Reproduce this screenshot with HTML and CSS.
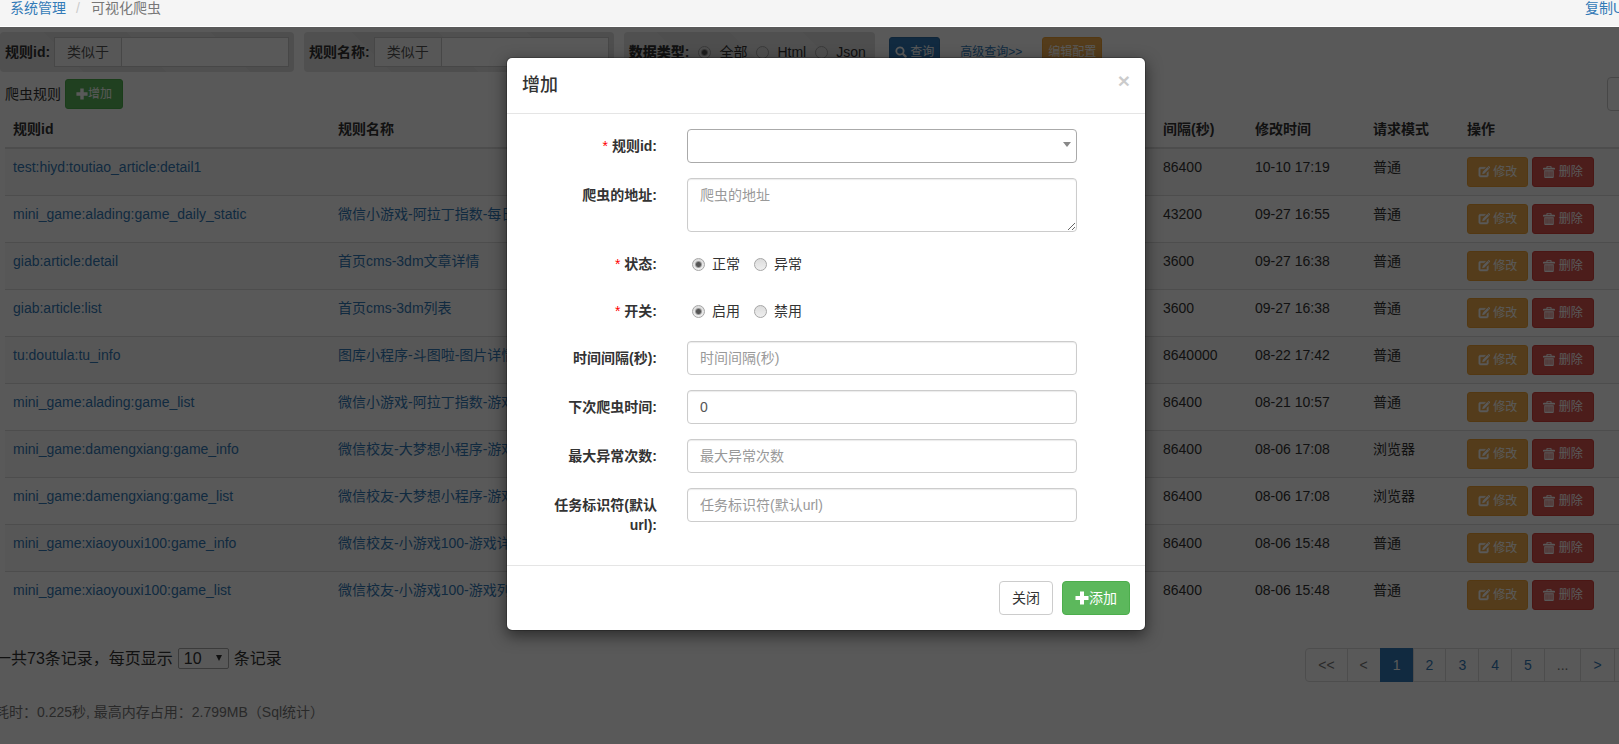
FILE: index.html
```html
<!DOCTYPE html>
<html lang="zh-CN">
<head>
<meta charset="utf-8">
<title>可视化爬虫</title>
<link rel="stylesheet" href="styles.css">
</head>
<body>
<svg class="sprite" aria-hidden="true">
  <symbol id="i-plus" viewBox="0 0 14 14"><path d="M5 .5h4V5h4.500v4H9v4.500H5V9H.5V5H5z"/></symbol>
  <symbol id="i-search" viewBox="0 0 14 14"><path fill-rule="evenodd" d="M5.800.6a5.200 5.200 0 1 0 2.700 9.600l3 3.200a1.100 1.100 0 0 0 1.600 0l.3-.3a1.100 1.100 0 0 0 0-1.600L10.300 8.500A5.200 5.200 0 0 0 5.800.6zm0 2a3.200 3.200 0 1 1 0 6.400 3.200 3.200 0 0 1 0-6.400z"/></symbol>
  <symbol id="i-edit" viewBox="0 0 14 14"><path stroke="currentColor" stroke-width=".5" d="M2.600 1.500h6.200L7.200 3.200H3.400c-.5 0-.8.3-.8.8v6.400c0 .5.3.8.8.8h6.200c.5 0 .8-.3.8-.8V8.200l1.700-1.700v4.400c0 1.200-.8 2-2 2H2.900c-1.200 0-2-.8-2-2V3.500c0-1.200.7-2 1.700-2z"/><path d="M11 1.300l2 2-5.400 5.400-2.700.8.700-2.800zM11.500.8l.6-.5c.3-.3.6-.3.9 0l1 1c.3.3.3.6 0 .9l-.5.6z"/></symbol>
  <symbol id="i-trash" viewBox="0 0 14 14"><path fill-rule="evenodd" d="M5 0h4c.6 0 1 .4 1 1v1h3c.5 0 1 .4 1 1v1H0V3c0-.6.500-1 1-1h3V1c0-.6.400-1 1-1zm.2 1v1h3.600V1zM1.500 5h11v8c0 .6-.4 1-1 1h-9c-.6 0-1-.4-1-1zM3 6v6.500h1V6zm2.300 0v6.500h1V6zm2.400 0v6.500h1V6zM10 6v6.500h1V6z"/></symbol>
</svg>

<div class="page">
  <nav class="crumbs">
    <a href="#">系统管理</a><span class="crumb-sep">/</span><span class="crumb-now">可视化爬虫</span>
    <a class="crumb-copy" href="#">复制URL</a>
  </nav>

  <main class="workspace">
    <form class="filters">
      <div class="filter">
        <label for="f-id">规则id:</label>
        <div class="group"><span class="addon">类似于</span><input id="f-id" type="text"></div>
      </div>
      <div class="filter">
        <label for="f-name">规则名称:</label>
        <div class="group"><span class="addon">类似于</span><input id="f-name" type="text"></div>
      </div>
      <div class="filter filter-type">
        <b>数据类型:</b>
        <label class="choice"><input type="radio" name="type" checked>全部</label>
        <label class="choice"><input type="radio" name="type">Html</label>
        <label class="choice"><input type="radio" name="type">Json</label>
      </div>
      <div class="filter-actions">
        <button type="button" class="btn sm tight primary"><svg><use href="#i-search"/></svg> 查询</button>
        <a href="#">高级查询&gt;&gt;</a>
        <button type="button" class="btn sm tight warning">编辑配置</button>
      </div>
    </form>

    <div class="toolbar">
      <span>爬虫规则</span>
      <button type="button" class="btn sm success"><svg><use href="#i-plus"/></svg>增加</button>
      <button type="button" class="btn plain export" aria-label="导出"><svg><use href="#i-edit"/></svg></button>
    </div>

    <table class="rules">
      <colgroup><col class="c-id"><col><col class="c-gap"><col class="c-time"><col class="c-mode"><col class="c-ops"></colgroup>
      <thead><tr><th>规则id</th><th>规则名称</th><th>间隔(秒)</th><th>修改时间</th><th>请求模式</th><th>操作</th></tr></thead>
      <tbody>
        <tr><td><a href="#">test:hiyd:toutiao_article:detail1</a></td><td></td><td>86400</td><td>10-10 17:19</td><td>普通</td><td><div class="ops"><button type="button" class="btn sm warning"><svg><use href="#i-edit"/></svg> 修改</button><button type="button" class="btn sm danger"><svg><use href="#i-trash"/></svg> 删除</button></div></td></tr>
        <tr><td><a href="#">mini_game:alading:game_daily_static</a></td><td><a href="#">微信小游戏-阿拉丁指数-每日</a></td><td>43200</td><td>09-27 16:55</td><td>普通</td><td><div class="ops"><button type="button" class="btn sm warning"><svg><use href="#i-edit"/></svg> 修改</button><button type="button" class="btn sm danger"><svg><use href="#i-trash"/></svg> 删除</button></div></td></tr>
        <tr><td><a href="#">giab:article:detail</a></td><td><a href="#">首页cms-3dm文章详情</a></td><td>3600</td><td>09-27 16:38</td><td>普通</td><td><div class="ops"><button type="button" class="btn sm warning"><svg><use href="#i-edit"/></svg> 修改</button><button type="button" class="btn sm danger"><svg><use href="#i-trash"/></svg> 删除</button></div></td></tr>
        <tr><td><a href="#">giab:article:list</a></td><td><a href="#">首页cms-3dm列表</a></td><td>3600</td><td>09-27 16:38</td><td>普通</td><td><div class="ops"><button type="button" class="btn sm warning"><svg><use href="#i-edit"/></svg> 修改</button><button type="button" class="btn sm danger"><svg><use href="#i-trash"/></svg> 删除</button></div></td></tr>
        <tr><td><a href="#">tu:doutula:tu_info</a></td><td><a href="#">图库小程序-斗图啦-图片详情</a></td><td>8640000</td><td>08-22 17:42</td><td>普通</td><td><div class="ops"><button type="button" class="btn sm warning"><svg><use href="#i-edit"/></svg> 修改</button><button type="button" class="btn sm danger"><svg><use href="#i-trash"/></svg> 删除</button></div></td></tr>
        <tr><td><a href="#">mini_game:alading:game_list</a></td><td><a href="#">微信小游戏-阿拉丁指数-游戏</a></td><td>86400</td><td>08-21 10:57</td><td>普通</td><td><div class="ops"><button type="button" class="btn sm warning"><svg><use href="#i-edit"/></svg> 修改</button><button type="button" class="btn sm danger"><svg><use href="#i-trash"/></svg> 删除</button></div></td></tr>
        <tr><td><a href="#">mini_game:damengxiang:game_info</a></td><td><a href="#">微信校友-大梦想小程序-游戏</a></td><td>86400</td><td>08-06 17:08</td><td>浏览器</td><td><div class="ops"><button type="button" class="btn sm warning"><svg><use href="#i-edit"/></svg> 修改</button><button type="button" class="btn sm danger"><svg><use href="#i-trash"/></svg> 删除</button></div></td></tr>
        <tr><td><a href="#">mini_game:damengxiang:game_list</a></td><td><a href="#">微信校友-大梦想小程序-游戏</a></td><td>86400</td><td>08-06 17:08</td><td>浏览器</td><td><div class="ops"><button type="button" class="btn sm warning"><svg><use href="#i-edit"/></svg> 修改</button><button type="button" class="btn sm danger"><svg><use href="#i-trash"/></svg> 删除</button></div></td></tr>
        <tr><td><a href="#">mini_game:xiaoyouxi100:game_info</a></td><td><a href="#">微信校友-小游戏100-游戏详情</a></td><td>86400</td><td>08-06 15:48</td><td>普通</td><td><div class="ops"><button type="button" class="btn sm warning"><svg><use href="#i-edit"/></svg> 修改</button><button type="button" class="btn sm danger"><svg><use href="#i-trash"/></svg> 删除</button></div></td></tr>
        <tr><td><a href="#">mini_game:xiaoyouxi100:game_list</a></td><td><a href="#">微信校友-小游戏100-游戏列表</a></td><td>86400</td><td>08-06 15:48</td><td>普通</td><td><div class="ops"><button type="button" class="btn sm warning"><svg><use href="#i-edit"/></svg> 修改</button><button type="button" class="btn sm danger"><svg><use href="#i-trash"/></svg> 删除</button></div></td></tr>
      </tbody>
    </table>

    <div class="paging">
      <label class="per-page">一共73条记录，每页显示
        <span class="size-box"><select><option>10</option></select></span>
        条记录</label>
      <ul class="pages">
        <li><span>&lt;&lt;</span></li><li><span>&lt;</span></li><li><a class="on" href="#">1</a></li><li><a href="#">2</a></li><li><a href="#">3</a></li><li><a href="#">4</a></li><li><a href="#">5</a></li><li><span>...</span></li><li><a href="#">&gt;</a></li><li><a href="#">&gt;&gt;</a></li>
      </ul>
    </div>
    <p class="stats">耗时：0.225秒, 最高内存占用：2.799MB（Sql统计）</p>

    <div class="backdrop">
      <form class="modal" role="dialog" aria-labelledby="modal-title">
        <header class="modal-head">
          <h4 id="modal-title">增加</h4>
          <button type="button" class="close" aria-label="关闭窗口">×</button>
        </header>
        <div class="modal-body">
          <div class="field"><label for="m-id"><i>*</i> 规则id:</label><div class="pick"><select id="m-id" class="control"><option></option></select></div></div>
          <div class="field"><label for="m-url">爬虫的地址:</label><textarea id="m-url" class="control" rows="2" placeholder="爬虫的地址"></textarea></div>
          <div class="field"><span class="label"><i>*</i> 状态:</span><div class="choices"><label class="choice"><input type="radio" name="state" checked>正常</label><label class="choice"><input type="radio" name="state">异常</label></div></div>
          <div class="field"><span class="label"><i>*</i> 开关:</span><div class="choices"><label class="choice"><input type="radio" name="switch" checked>启用</label><label class="choice"><input type="radio" name="switch">禁用</label></div></div>
          <div class="field"><label for="m-gap">时间间隔(秒):</label><input id="m-gap" class="control" type="text" placeholder="时间间隔(秒)"></div>
          <div class="field"><label for="m-next">下次爬虫时间:</label><input id="m-next" class="control" type="text" value="0"></div>
          <div class="field"><label for="m-max">最大异常次数:</label><input id="m-max" class="control" type="text" placeholder="最大异常次数"></div>
          <div class="field"><label for="m-task">任务标识符(默认url):</label><input id="m-task" class="control" type="text" placeholder="任务标识符(默认url)"></div>
        </div>
        <footer class="modal-foot">
          <button type="button" class="btn plain">关闭</button>
          <button type="button" class="btn success"><svg><use href="#i-plus"/></svg>添加</button>
        </footer>
      </form>
    </div>
  </main>
</div>
</body>
</html>
```
FILE: styles.css
```css
* { box-sizing: border-box; }

html, body { margin: 0; }

body {
  overflow: hidden;
  font: 14px/20px "Liberation Sans", "Noto Sans CJK SC", sans-serif;
  color: #333;
  background: #fff;
}

input, select, textarea, button { font: inherit; color: inherit; margin: 0; }
a { color: #337ab7; text-decoration: none; }
.sprite { display: none; }

/* The content is wider than the window and runs past its right edge. */
.page {
  width: calc(100% + 33px);
  min-height: 100vh;
  display: flex;
  flex-direction: column;
}

.crumbs {
  display: flex;
  padding: 0 11px 10px 10px;
  margin-bottom: 1px;
  line-height: 16px;
  background: #f5f5f5;
}
.crumb-sep { padding: 0 11px 0 10px; color: #ccc; }
.crumb-now { color: #777; }
.crumb-copy { margin-left: auto; }

.workspace { position: relative; flex: 1; padding: 5px 5px 0 0; }

/* Filters */
.filters { display: flex; gap: 10px; }
.filter {
  display: flex;
  align-items: center;
  gap: 4px;
  height: 40px;
  padding: 0 5px;
  border-radius: 4px;
  font-weight: bold;
  background: #e0e0e0 linear-gradient(45deg, rgba(255,255,255,.15) 25%, transparent 25%, transparent 50%, rgba(255,255,255,.15) 50%, rgba(255,255,255,.15) 75%, transparent 75%);
}
.group { display: flex; height: 30px; font-weight: normal; }
.addon {
  padding: 4px 12px;
  border: 1px solid #ccc;
  border-right: 0;
  background: #f9f9f9;
  color: #555;
}
.group input { width: 168px; border: 1px solid #ccc; background: #fff; }
.filter-type { gap: 0; padding-right: 9px; }
.filter-type .choice { margin-left: 9px; gap: 8px; }
.filter-actions { display: flex; align-items: center; gap: 20px; margin-left: 4px; font-size: 12px; }

.choice { display: inline-flex; align-items: center; gap: 7px; font-weight: normal; }
.choice input {
  appearance: none;
  width: 13px;
  height: 13px;
  border: 1px solid #a6a6a6;
  border-radius: 50%;
  background: linear-gradient(#dcdcdc, #efefef);
}
.choice input:checked {
  background: radial-gradient(circle, #555 0 2px, transparent 4px), linear-gradient(#dcdcdc, #efefef);
}

/* Buttons */
.btn {
  height: 34px;
  padding: 0 12px;
  border: 1px solid;
  border-radius: 4px;
  color: #fff;
  white-space: pre;
}
.btn svg { width: 14px; height: 14px; fill: currentColor; vertical-align: -2px; }
.btn.sm { height: 30px; padding: 0 10px; border-radius: 3px; font-size: 12px; }
.btn.sm svg { width: 12px; height: 12px; }
.btn.tight { padding: 0 5px; }
.primary { background: #337ab7; border-color: #2e6da4; }
.success { background: #5cb85c; border-color: #4cae4c; }
.warning { background: #f0ad4e; border-color: #eea236; }
.danger { background: #d9534f; border-color: #d43f3a; }
.plain { background: #fff; border-color: #ccc; color: #333; }

.toolbar { display: flex; align-items: center; gap: 4px; height: 34px; margin: 5px 0 0 5px; }
.export { margin-left: auto; color: #5a9b2f; }

/* Table */
.rules { width: calc(100% - 5px); margin-left: 5px; border-spacing: 0; table-layout: fixed; }
.c-id { width: 325px; }
.c-gap { width: 92px; }
.c-time { width: 118px; }
.c-mode { width: 94px; }
.c-ops { width: 188px; }
.rules th, .rules td { padding: 8px; text-align: left; vertical-align: top; }
.rules th { border-bottom: 1px solid #ddd; }
.rules td { border-top: 1px solid #ddd; }
.rules tbody tr:nth-child(odd) { background: #f9f9f9; }
.ops { display: flex; gap: 4px; }

/* Paging */
.paging { display: flex; justify-content: space-between; margin: 30px -9px 0 -5px; }
.per-page { display: flex; gap: 5px; height: 21px; font-size: 16px; line-height: 21px; }
.size-box { position: relative; display: flex; }
.size-box select {
  appearance: none;
  width: 51px;
  padding: 0 5px;
  border: 1px solid #a9a9a9;
  border-radius: 2px;
  background: #fff;
  line-height: 19px;
}
.size-box::after {
  content: "";
  position: absolute;
  right: 7px;
  top: 7px;
  border: 3px solid transparent;
  border-top: 6px solid #333;
  border-bottom: 0;
}
.pages { display: flex; margin: 0; padding: 0; list-style: none; }
.pages a, .pages span { display: block; padding: 6px 12px; margin-left: -1px; border: 1px solid #ddd; background: #fff; }
.pages span { color: #777; }
.pages li:first-child span { border-radius: 4px 0 0 4px; }
.pages .on { background: #337ab7; border-color: #337ab7; color: #fff; }
.stats { margin: 20px 0 0 -5px; color: #777; }

/* Dialog */
.backdrop { position: absolute; inset: 0; padding-top: 30px; background: rgba(0,0,0,.65); }
.modal {
  width: 640px;
  margin: 0 auto;
  border: 1px solid rgba(0,0,0,.2);
  border-radius: 6px;
  background: #fff;
  background-clip: padding-box;
  box-shadow: 0 5px 15px rgba(0,0,0,.5);
}
.modal-head {
  display: flex;
  justify-content: space-between;
  align-items: flex-start;
  padding: 15px;
  border-bottom: 1px solid #e5e5e5;
}
.modal-head h4 { margin: 0; font-size: 18px; line-height: 25px; font-weight: 500; }
.close { padding: 0; border: 0; background: none; font-size: 21px; line-height: 16px; font-weight: bold; color: #000; opacity: .2; }
.modal-body { padding: 15px 68px 15px 30px; }
.field { display: grid; grid-template-columns: 120px 1fr; gap: 30px; margin-bottom: 15px; }
.field > label, .label { padding-top: 7px; text-align: right; font-weight: bold; }
.field i { font-style: normal; font-weight: normal; color: red; }
.control {
  display: block;
  width: 100%;
  height: 34px;
  padding: 6px 12px;
  border: 1px solid #ccc;
  border-radius: 4px;
  background: #fff;
  color: #555;
  box-shadow: inset 0 1px 1px rgba(0,0,0,.08);
}
textarea.control { height: 54px; resize: vertical; }
.control::placeholder { color: #999; }
.pick { position: relative; }
.pick .control { appearance: none; border-color: #aaa; box-shadow: none; }
.pick::after {
  content: "";
  position: absolute;
  right: 6px;
  top: 13px;
  border: 4px solid transparent;
  border-top: 5px solid #888;
  border-bottom: 0;
}
.choices { display: flex; align-items: flex-start; gap: 14px; height: 32px; padding: 7px 0 0 5px; }
.modal-foot { display: flex; justify-content: flex-end; gap: 9px; padding: 15px; border-top: 1px solid #e5e5e5; }
```
